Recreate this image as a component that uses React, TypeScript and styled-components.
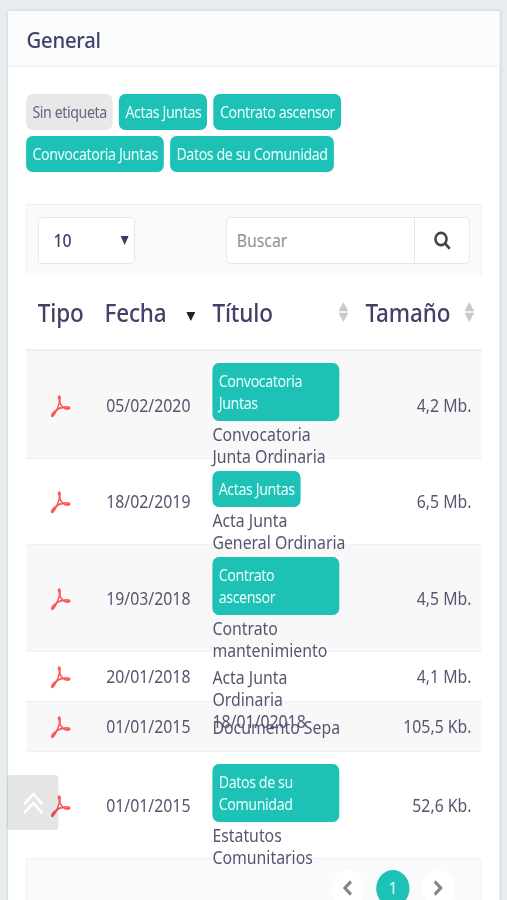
import React from "react";
import styled, { createGlobalStyle, css } from "styled-components";

const GlobalStyle = createGlobalStyle`
  html, body { margin: 0; padding: 0; overflow: hidden; background: #e8ecef; }
  * { box-sizing: border-box; }
`;

const Viewport = styled.div`
  width: 507px;
  height: 900px;
  overflow: hidden;
  background: #e8ecef;
`;

/* Condensed rendering of the whole layout: 564px wide, drawn at 90%. */
const Page = styled.div`
  position: relative;
  width: 564px;
  height: 900px;
  padding: 11px 9px 0;
  transform: scaleX(0.9);
  transform-origin: 0 0;
  font-family: "Noto Sans", "Open Sans", sans-serif;
  font-size: 17.6px;
  line-height: 22px;
  color: #575672;
`;

const Card = styled.section`
  height: 960px;
  background: #fff;
  box-shadow: 0 0 3px rgba(60, 80, 100, 0.2);
`;

const CardHeader = styled.header`
  display: flex;
  align-items: center;
  height: 56px;
  padding: 3px 20.5px 0;
  background: #f9fbfd;
  border-bottom: 1px solid #ebedf0;
`;

const CardTitle = styled.h1`
  margin: 0;
  font-size: 22.5px;
  font-weight: 500;
  letter-spacing: -0.25px;
  color: #434168;
`;

const CardBody = styled.div`
  padding: 27px 20px 0;
`;

const TagList = styled.div`
  display: flex;
  flex-wrap: wrap;
  gap: 6px 7px;
  height: 110px;
  align-content: flex-start;
`;

const Tag = styled.span<{ $plain?: boolean; $wide?: boolean }>`
  display: block;
  width: ${(p) => (p.$wide ? "141px" : "fit-content")};
  padding: 7px 6.6px 7px 7px;
  border-radius: 7px;
  font-size: 15.8px;
  letter-spacing: -0.46px;
  line-height: 22px;
  color: ${(p) => (p.$plain ? "#66647e" : "#e6fffc")};
  background: ${(p) => (p.$plain ? "#e8e8e8" : "#1ec1b6")};
`;

const Toolbar = styled.div`
  display: flex;
  justify-content: space-between;
  height: 71px;
  padding: 12px 12px 0;
  background: #f9fafc;
  border: 1px solid #eef0f2;
  border-bottom: 0;
`;

const control = css`
  height: 47px;
  background: #fff;
  border: 1.5px solid #e2e5ea;
  border-radius: 5px;
`;

const PageSize = styled.div`
  ${control}
  display: flex;
  align-items: center;
  justify-content: space-between;
  width: 108px;
  padding: 0 6px 1px 16.5px;
  font-weight: 500;
  color: #434168;
`;

const Search = styled.div`
  ${control}
  display: flex;
  width: 271px;
`;

const SearchInput = styled.div`
  display: flex;
  align-items: center;
  width: 209px;
  padding: 0 0 1px 11px;
  border-right: 1.5px solid #e2e5ea;
  color: #929292;
`;

const SearchButton = styled.div`
  display: flex;
  flex: 1;
  align-items: center;
  justify-content: center;
`;

const columns = css`
  display: grid;
  grid-template-columns: 89px 118px 169px 1fr;
`;

const HeadRow = styled.div`
  ${columns}
  height: 76px;
  border-bottom: 2px solid #ebedef;
  align-items: center;
  font-size: 25px;
  font-weight: 500;
  color: #434168;
`;

const HeadCell = styled.div<{ $left?: number; $right?: number }>`
  display: flex;
  align-items: center;
  justify-content: space-between;
  letter-spacing: -0.15px;
  padding-right: ${(p) => p.$right ?? 0}px;
  padding-left: ${(p) => p.$left ?? 0}px;
`;

const SecondColumnLabel = styled.span`
  margin-left: -2px;
`;

const SortedMark = styled.span`
  display: flex;
  padding-top: 9px;
`;

const Row = styled.div<{ $h: number; $shaded: boolean }>`
  ${columns}
  height: ${(p) => p.$h}px;
  align-items: center;
  background: ${(p) => (p.$shaded ? "#f8f8f8" : "#fff")};
  border-bottom: 1px solid #eff1f2;
`;

const TypeCell = styled.div`
  display: flex;
  padding: 3px 0 0 27px;
`;

const SizeCell = styled.div`
  padding-right: 11px;
  text-align: right;
`;

const TitleCell = styled.div<{ $tagged: boolean }>`
  position: relative;
  z-index: 1;
  align-self: start;
  height: 0;
  padding-top: ${(p) => (p.$tagged ? 12 : 14)}px;
`;

const TitleText = styled.div<{ $tagged: boolean }>`
  margin-top: ${(p) => (p.$tagged ? 2 : 0)}px;
  white-space: pre-line;
`;

const Footer = styled.div`
  display: flex;
  justify-content: flex-end;
  gap: 13.5px;
  height: 80px;
  padding: 11px 28.5px 0;
  background: #f9fafc;
  border: 1px solid #eef0f2;
  border-top: 0;
`;

const PageButton = styled.div<{ $active?: boolean }>`
  display: flex;
  align-items: center;
  justify-content: center;
  width: 37px;
  height: 37px;
  border-radius: 50%;
  font-size: 16px;
  color: #e6fffc;
  background: ${(p) => (p.$active ? "#1ec1b6" : "#fff")};
`;

const ToTop = styled.div`
  position: absolute;
  z-index: 2;
  left: 8px;
  top: 775px;
  display: flex;
  align-items: center;
  justify-content: center;
  width: 57px;
  height: 55px;
  border-radius: 4px;
  background: rgba(0, 0, 0, 0.1);
`;

const PdfIcon = () => (
  <svg width="23" height="23" viewBox="0 0 23 23" fill="none" stroke="#fb5a5c" strokeWidth="1.8" strokeLinejoin="round" strokeLinecap="round">
    <path d="M10.2 5.2C8.6 2.6 8.7 1.2 9.8 1.2c1.2 0 1.2 1.6.4 4" />
    <path d="M10.2 5.2c.3 4 3.4 7.200 6.400 8.500 2.600.7 5.200.1 4.900-.8-.4-1.100-3-1.200-6-.7-3.400.5-6.300 1.300-8.300 2.500" />
    <path d="M10.200 5.200c-.2 4.200-2.800 9.400-5 12.800-1.600 2.500-3 3.800-3.700 3.100-.9-.9 1.600-3.900 5-5.800" />
  </svg>
);

const SortIcon = () => (
  <svg width="11" height="20" viewBox="0 0 11 20" fill="#c9c9c9">
    <path d="M5.500 0 11 9.300H0zM5.500 20 0 10.700h11z" />
  </svg>
);

const DownIcon = ({ color = "#3d3b63", w = 9, h = 9 }: { color?: string; w?: number; h?: number }) => (
  <svg width={w} height={h} viewBox="0 0 10 10" preserveAspectRatio="none" fill={color}>
    <path d="M0 0h10L5 10z" />
  </svg>
);

const Chevron = ({ next }: { next?: boolean }) => (
  <svg width="12" height="16" viewBox="0 0 12 16" fill="none" stroke="#858585" strokeWidth="3.200">
    <path d={next ? "M2 1.500 8.800 8 2 14.500" : "M10 1.500 3.200 8 10 14.500"} />
  </svg>
);

const documents = [
  { date: "05/02/2020", tag: "Convocatoria\nJuntas", wide: true, title: "Convocatoria\nJunta Ordinaria", size: "4,2 Mb.", h: 108 },
  { date: "18/02/2019", tag: "Actas Juntas", wide: false, title: "Acta Junta\nGeneral Ordinaria", size: "6,5 Mb.", h: 85.5 },
  { date: "19/03/2018", tag: "Contrato\nascensor", wide: true, title: "Contrato\nmantenimiento", size: "4,5 Mb.", h: 107.5 },
  { date: "20/01/2018", tag: "", wide: false, title: "Acta Junta\nOrdinaria\n18/01/02018", size: "4,1 Mb.", h: 49.5 },
  { date: "01/01/2015", tag: "", wide: false, title: "Documento Sepa", size: "105,5 Kb.", h: 50 },
  { date: "01/01/2015", tag: "Datos de su\nComunidad", wide: true, title: "Estatutos\nComunitarios", size: "52,6 Kb.", h: 107 },
];

const RowTag = styled(Tag)`
  white-space: pre-line;
`;

export default function App() {
  return (
    <Viewport>
      <GlobalStyle />
      <Page>
        <Card>
          <CardHeader>
            <CardTitle>General</CardTitle>
          </CardHeader>
          <CardBody>
            <TagList>
              <Tag $plain>Sin etiqueta</Tag>
              <Tag>Actas Juntas</Tag>
              <Tag>Contrato ascensor</Tag>
              <Tag>Convocatoria Juntas</Tag>
              <Tag>Datos de su Comunidad</Tag>
            </TagList>
            <Toolbar>
              <PageSize>
                10
                <DownIcon />
              </PageSize>
              <Search>
                <SearchInput>Buscar</SearchInput>
                <SearchButton>
                  <svg width="19" height="19" viewBox="0 0 19 19" fill="none" stroke="#444" strokeWidth="2.800">
                    <circle cx="8" cy="8" r="6.200" />
                    <path d="m12.500 12.500 5.300 5.300" />
                  </svg>
                </SearchButton>
              </Search>
            </Toolbar>
            <HeadRow>
              <HeadCell $left={13}>Tipo</HeadCell>
              <HeadCell $right={19}>
                <SecondColumnLabel>Fecha</SecondColumnLabel>
                <SortedMark>
                  <DownIcon color="#222" w={10} h={9} />
                </SortedMark>
              </HeadCell>
              <HeadCell $right={18}>
                Título
                <SortIcon />
              </HeadCell>
              <HeadCell $left={1} $right={8}>
                Tamaño
                <SortIcon />
              </HeadCell>
            </HeadRow>
            {documents.map((d, i) => (
              <Row key={i} $h={d.h} $shaded={i % 2 === 0}>
                <TypeCell>
                  <PdfIcon />
                </TypeCell>
                <div>{d.date}</div>
                <TitleCell $tagged={!!d.tag}>
                  {d.tag && <RowTag $wide={d.wide}>{d.tag}</RowTag>}
                  <TitleText $tagged={!!d.tag}>{d.title}</TitleText>
                </TitleCell>
                <SizeCell>{d.size}</SizeCell>
              </Row>
            ))}
            <Footer>
              <PageButton>
                <Chevron />
              </PageButton>
              <PageButton $active>1</PageButton>
              <PageButton>
                <Chevron next />
              </PageButton>
            </Footer>
          </CardBody>
        </Card>
        <ToTop>
          <svg width="24" height="24" viewBox="0 0 24 24" fill="none" stroke="#fff" strokeWidth="2.600">
            <path d="m2 13 10-10 10 10M2 22l10-10 10 10" />
          </svg>
        </ToTop>
      </Page>
    </Viewport>
  );
}
